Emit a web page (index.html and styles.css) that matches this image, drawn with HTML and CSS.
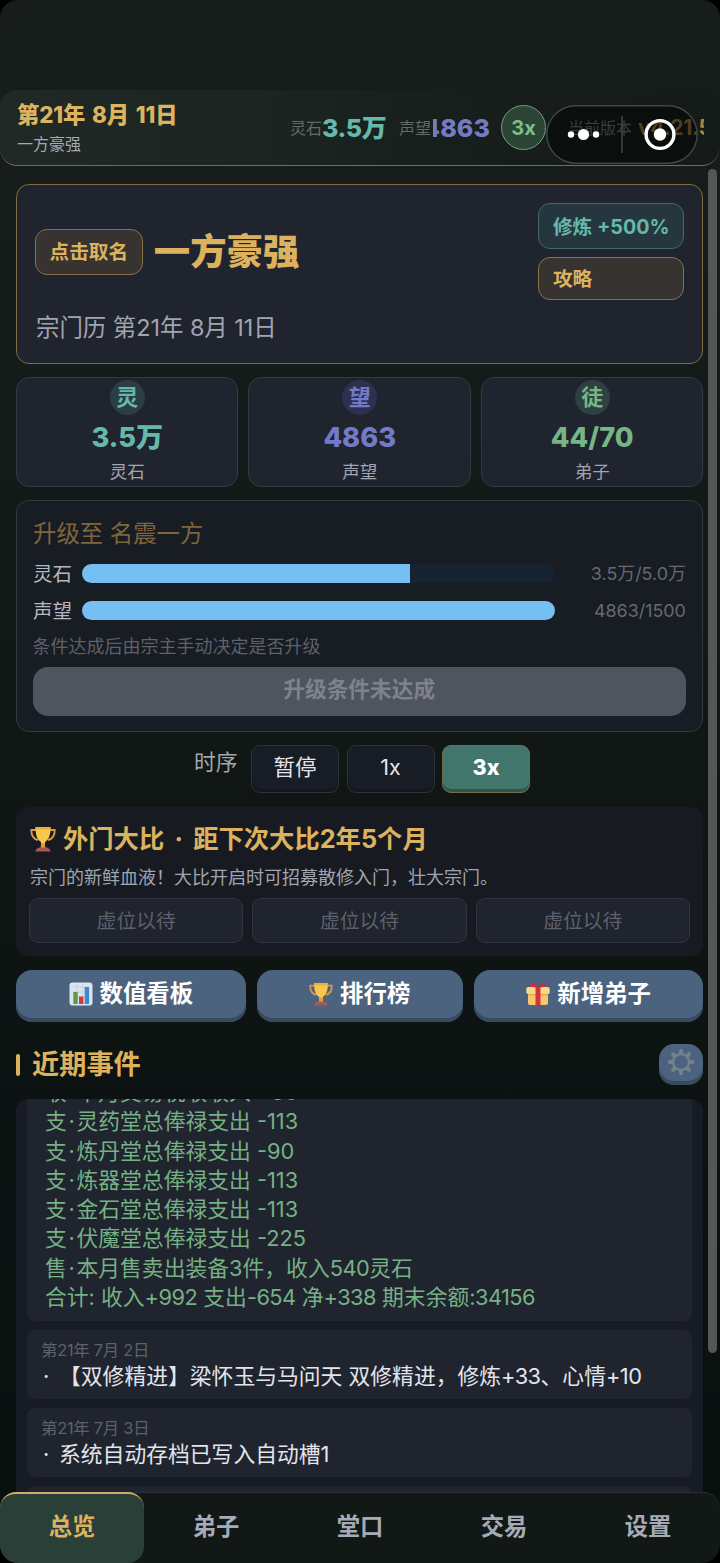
FILE: index.html
```html
<!DOCTYPE html>
<html lang="zh-CN">
<head>
<meta charset="utf-8">
<title>一方豪强</title>
<link rel="stylesheet" href="styles.css">
</head>
<body>
<svg class="defs" width="0" height="0" aria-hidden="true">
  <symbol id="trophy" viewBox="0 0 26 26">
    <path d="M6 4H1.3C1.2 9.5 3.5 13 8 14M20 4h4.7C24.8 9.5 22.500 13 18 14" fill="none" stroke="#d79a45" stroke-width="1.900"/>
    <path d="M5.500 1h15c0 8-1.500 12.500-5.500 15v4h-4v-4C7 13.500 5.500 9 5.500 1z" fill="#fbc64c"/>
    <path d="M5.500 1h15v2.500h-15z" fill="#e9ad43"/>
    <path d="M11.500 17h3l1 5h-5z" fill="#df9a3c"/>
    <path d="M5.500 25.500c0-2.500 2.500-3.800 4.500-4h6c2 .2 4.500 1.500 4.500 4z" fill="#a9594c"/>
  </symbol>
</svg>
<div class="app">
  <header class="topbar">
    <div class="when">
      <div class="when-date">第21年 8月 11日</div>
      <div class="when-rank">一方豪强</div>
    </div>
    <div class="res"><span class="res-label">灵石</span><b class="teal">3.5万</b></div>
    <div class="res fame"><span class="res-label">声望</span><span class="clip"><b class="violet">4863</b></span></div>
    <div class="pace">3x</div>
    <div class="version"><span class="res-label">当前版本</span><b>v4.21.5</b></div>
    <div class="capsule">
      <svg width="152" height="58" viewBox="0 0 152 58">
        <g fill="#fff"><circle cx="25" cy="29.500" r="3.200"/><circle cx="37.500" cy="29.500" r="5.600"/><circle cx="50" cy="29.500" r="3.200"/><circle cx="114" cy="29.500" r="6.200"/></g>
        <path d="M76 11v37" stroke="#444846" stroke-width="1.500"/>
        <circle cx="114" cy="29.500" r="13.900" fill="none" stroke="#fff" stroke-width="3.400"/>
      </svg>
    </div>
  </header>

  <main class="content">
    <section class="card sect">
      <div class="sect-top">
        <span class="tag gold name-tag">点击取名</span>
        <h1 class="sect-name">一方豪强</h1>
        <div class="sect-side">
          <span class="tag cyan">修炼 +500%</span>
          <span class="tag gold guide">攻略</span>
        </div>
      </div>
      <div class="sect-date">宗门历 第21年 8月 11日</div>
    </section>

    <section class="stats">
      <div class="card stat teal"><span class="orb">灵</span><b>3.5万</b><small>灵石</small></div>
      <div class="card stat violet"><span class="orb">望</span><b>4863</b><small>声望</small></div>
      <div class="card stat green"><span class="orb">徒</span><b>44/70</b><small>弟子</small></div>
    </section>

    <section class="card upgrade">
      <h2 class="upgrade-title">升级至 名震一方</h2>
      <div class="req"><span>灵石</span><div class="track"><div class="fill" style="width:69.300%"></div></div><em>3.5万/5.0万</em></div>
      <div class="req"><span>声望</span><div class="track"><div class="fill" style="width:100%"></div></div><em>4863/1500</em></div>
      <p class="hint">条件达成后由宗主手动决定是否升级</p>
      <div class="upgrade-btn">升级条件未达成</div>
    </section>

    <section class="speed">
      <span class="speed-label">时序</span>
      <span class="speed-btn">暂停</span>
      <span class="speed-btn">1x</span>
      <span class="speed-btn on">3x</span>
    </section>

    <section class="contest">
      <h2 class="contest-title"><svg width="26" height="26"><use href="#trophy"/></svg><span>外门大比</span><i>·</i><span>距下次大比2年5个月</span></h2>
      <p class="contest-desc">宗门的新鲜血液！大比开启时可招募散修入门，壮大宗门。</p>
      <div class="slots"><span>虚位以待</span><span>虚位以待</span><span>虚位以待</span></div>
    </section>

    <section class="actions">
      <span class="btn"><svg width="24" height="24" viewBox="0 0 24 24"><rect x=".5" y=".5" width="23" height="23" rx="3" fill="#dce5ee"/><path d="M4 5h16M4 10h16M4 15h16M8 2v20M14 2v20" stroke="#c3d1df" stroke-width=".8"/><path d="M4.300 10h4.400v12H4.300z" fill="#5c9b45"/><path d="M10 14.500h4.400V22H10z" fill="#d23c38"/><path d="M15.700 5h4.400v17h-4.400z" fill="#3f86d4"/></svg>数值看板</span>
      <span class="btn mid"><svg width="24" height="24"><use href="#trophy"/></svg>排行榜</span>
      <span class="btn"><svg width="24" height="24" viewBox="0 0 24 24"><path d="M2 10h20v11a2 2 0 0 1-2 2H4a2 2 0 0 1-2-2z" fill="#f5c96e"/><rect x=".3" y="5" width="23.400" height="7" rx="1.800" fill="#fad985"/><path d="M2 12h20v1.200H2z" fill="#dba94f"/><path d="M9.500 5h5v18h-5z" fill="#d8323f"/><path d="M12 5.500C9 .5 4 .5 4 2.500S6 5.500 12 5.500zM12 5.500C15 .5 20 .5 20 2.500s-2 3-8 3z" fill="#c92f3a"/></svg>新增弟子</span>
    </section>

    <section class="events-head">
      <h2>近期事件</h2>
      <span class="gear"><svg width="28" height="28" viewBox="0 0 28 28"><path fill="#75818c" fill-rule="evenodd" d="M12.600 1h2.800l.9 4.200 2.300 1 3.700-2.400 2 2-2.400 3.700 1 2.300 4.100.8v2.800l-4.200.9-.9 2.300 2.400 3.700-2 2-3.700-2.400-2.300 1-.9 4.100h-2.800l-.9-4.200-2.300-.9-3.700 2.400-2-2 2.400-3.700-1-2.300-4.100-.9v-2.800l4.200-.8.9-2.300-2.400-3.700 2-2 3.700 2.400 2.300-1zM14 7.200a6.800 6.800 0 1 0 0 13.600 6.800 6.800 0 0 0 0-13.600z"/></svg></span>
    </section>

    <section class="log">
      <article class="entry ledger">
        <p>收<s>·</s>本月交易税收收入 +30</p>
        <p>支<s>·</s>灵药堂总俸禄支出 -113</p>
        <p>支<s>·</s>炼丹堂总俸禄支出 -90</p>
        <p>支<s>·</s>炼器堂总俸禄支出 -113</p>
        <p>支<s>·</s>金石堂总俸禄支出 -113</p>
        <p>支<s>·</s>伏魔堂总俸禄支出 -225</p>
        <p>售<s>·</s>本月售卖出装备3件，收入<b>540</b>灵石</p>
        <p>合计: 收入<b>+992</b> 支出<b>-654</b> 净<b>+338</b> 期末余额<b>:34156</b></p>
      </article>
      <article class="entry"><time>第21年 7月 2日</time><p><i>·</i>【双修精进】梁怀玉与马问天 双修精进，修炼<b>+33</b>、心情<b>+10</b></p></article>
      <article class="entry"><time>第21年 7月 3日</time><p><i>·</i>系统自动存档已写入自动槽1</p></article>
      <article class="entry"></article>
    </section>
  </main>
  <div class="scrollbar"></div>

  <nav class="tabs">
    <span class="tab on">总览</span><span class="tab">弟子</span><span class="tab">堂口</span><span class="tab">交易</span><span class="tab">设置</span>
  </nav>
</div>
</body>
</html>
```

FILE: styles.css
```css
* { box-sizing: border-box; margin: 0; padding: 0; }
html { background: #000; }
body {
  font-family: Inter, "Noto Sans CJK SC", sans-serif;
  color: #e3e5ec;
  background: #000;
}
i, em { font-style: normal; }
.defs { position: absolute; }

.app {
  position: relative;
  width: 720px;
  height: 1563px;
  padding-top: 90px;
  display: flex;
  flex-direction: column;
  overflow: hidden;
  border-radius: 18px;
  background: linear-gradient(180deg, #171d1b 0%, #151b19 25%, #101614 52%, #0c1211 72%, #08100e 100%);
}

.teal { color: #65b8aa; }
.violet { color: #737bc6; }
.green { color: #76b585; }

.topbar {
  position: relative;
  flex: none;
  width: 719px;
  height: 76px;
  padding-left: 17px;
  display: flex;
  align-items: center;
  border-bottom: 1.500px solid #806c44;
  border-radius: 17px;
  background: linear-gradient(90deg, #202925 0%, #1b2421 40%, #161d1a 70%, #151b19 100%);
}
.when { width: 273px; }
.when-date { margin-top: 1px; font-size: 22.300px; letter-spacing: -.1px; word-spacing: 2px; font-weight: 800; line-height: 30px; color: #dcb45f; white-space: nowrap; }
.when-rank { font-size: 16px; line-height: 24px; margin-top: 2px; color: #a4a9b2; }
.res { display: flex; align-items: center; width: 109px; white-space: nowrap; line-height: 30px; }
.res-label { font-size: 16px; color: #636967; }
.res b { font-size: 25px; font-weight: 800; letter-spacing: -.4px; }
.fame { width: 92px; }
.clip { width: 57px; margin-left: 2px; overflow: hidden; display: flex; justify-content: flex-end; }
.res .clip b { letter-spacing: .1px; }
.pace {
  width: 45px;
  height: 45px;
  margin-left: 10px;
  border: 1.500px solid #68a378;
  border-radius: 50%;
  background: #2c4435;
  color: #7dbd8a;
  font-size: 20px;
  font-weight: 700;
  line-height: 44px;
  text-align: center;
}
.version { display: flex; align-items: center; width: 136px; margin-left: 22px; overflow: hidden; white-space: nowrap; line-height: 30px; }
.version b { margin-left: 6px; font-size: 21px; letter-spacing: -.3px; color: #b28040; }
.version .res-label { color: #7c817f; }
.capsule {
  position: absolute;
  left: 546px;
  top: 15px;
  width: 152px;
  height: 59px;
  border-radius: 30px;
  background: rgba(2, 6, 6, .55);
  box-shadow: inset 0 0 0 1.500px #434644;
}

.content {
  flex: 1;
  min-height: 0;
  padding: 18px 16.600px 0 16px;
  display: flex;
  flex-direction: column;
}
.scrollbar { position: absolute; left: 708px; top: 169px; width: 9px; height: 1184px; border-radius: 5px; background: #555756; }

.card { border: 1px solid #343843; border-radius: 13px; background: #20242f; }
.tag { display: block; border: 1px solid; border-radius: 12px; padding: 0 13.500px; font-weight: 700; font-size: 19.700px; white-space: nowrap; }
.tag.gold { background: #363330; border-color: #8a714a; color: #dcb25e; }
.tag.cyan { background: #26363f; border-color: #41696e; color: #65b8aa; height: 46px; line-height: 46px; }
.sect { height: 180px; padding: 18px; border-color: #806b45; flex: none; }
.sect-top { display: flex; align-items: center; }
.name-tag { height: 46px; line-height: 44px; }
.sect-name { margin-left: 11px; font-size: 36.400px; font-weight: 800; line-height: 46px; color: #dcb25e; }
.sect-side { margin-left: auto; width: 146px; display: grid; gap: 8px; }
.guide { height: 43px; line-height: 42px; }
.sect-date { margin-top: 12px; padding-left: 1px; font-size: 23.400px; line-height: 32px; color: #a1a5b2; }

.stats { display: grid; grid-template-columns: repeat(3, 1fr); gap: 10px; margin-top: 13px; flex: none; }
.stat { height: 110px; padding-top: 2px; display: flex; flex-direction: column; align-items: center; }
.orb { width: 35px; height: 35px; border-radius: 50%; font-size: 22px; font-weight: 700; line-height: 34px; text-align: center; background: #2b3e46; }
.violet .orb { background: #2d3150; }
.green .orb { background: #2e413f; }
.stat b { font-size: 27.200px; font-weight: 800; line-height: 34px; margin-top: 6px; }
.stat small { font-size: 17.500px; line-height: 24px; margin-top: 5px; color: #a1a5b2; }

.upgrade { height: 232px; margin-top: 13px; padding: 17px 16.500px 16px 15.500px; background: #181c23; flex: none; }
.upgrade-title { padding-left: .5px; font-size: 23.400px; font-weight: 400; line-height: 32px; color: #80653c; }
.req { display: flex; align-items: center; height: 37px; padding-left: .5px; line-height: 26px; }
.upgrade-title + .req { margin-top: 5px; }
.req span { width: 49px; font-size: 19.500px; color: #b5b8c2; }
.track { width: 473px; height: 19px; border-radius: 10px; background: #182330; overflow: hidden; }
.fill { height: 100%; background: #76bff2; }
.req em { margin-left: auto; font-size: 17.900px; color: #656974; }
.hint { margin-top: 6px; font-size: 18px; line-height: 24px; color: #5d616b; }
.upgrade-btn { height: 49px; margin-top: 8px; border-radius: 15px; background: #4e555f; color: #7e828d; font-size: 21.700px; font-weight: 700; line-height: 44px; text-align: center; }

.speed { display: flex; gap: 7.500px; margin-top: 13px; padding-left: 178px; flex: none; }
.speed-label { width: 49.500px; font-size: 21.800px; line-height: 35px; color: #a1a5ac; }
.speed-btn { width: 88px; height: 48px; border: 1.500px solid #2d313b; border-radius: 9px; background: #181c24; box-shadow: inset 0 -3px #14171d; text-align: center; font-size: 21.500px; line-height: 42px; }
.speed-btn.on { background: #42756c; border-color: #766e40; box-shadow: inset 0 -3px #33544c; color: #fff; font-weight: 800; }

.contest { height: 149px; margin-top: 14px; padding: 16px 13.400px 0 13px; border-radius: 12px; background: #171b21; flex: none; }
.contest-title { display: flex; align-items: center; font-size: 25.300px; line-height: 32px; color: #dcb25e; padding-left: 1px; }
.contest-title span { margin-left: 7px; white-space: nowrap; }
.contest-title i { width: 29px; text-align: center; }
.contest-title i + span { margin-left: 0; }
.contest-desc { margin-top: 11px; padding-left: 1px; font-size: 18px; line-height: 24px; color: #a1a5b0; }
.slots { display: grid; grid-template-columns: repeat(3, 1fr); gap: 9px; margin-top: 8px; }
.slots span { height: 45px; border: 1.500px solid #303440; border-radius: 9px; background: #20242e; color: #5d616c; font-size: 19.800px; line-height: 44px; text-align: center; }

.actions { display: flex; gap: 11px; margin-top: 14px; flex: none; }
.btn { flex: 1; height: 52px; padding-bottom: 4px; border-radius: 16px; background: #4c637f; box-shadow: inset 0 -4px #394a60; color: #fff; display: flex; align-items: center; justify-content: center; gap: 7px; font-size: 23.400px; line-height: 34px; font-weight: 700; }
.btn.mid { flex: 0 0 206px; }

.events-head { display: flex; align-items: center; height: 41px; margin-top: 22px; padding-right: .4px; flex: none; }
.events-head h2 { display: flex; align-items: center; gap: 12px; font-size: 27.200px; line-height: 36px; color: #dcb25e; }
.events-head h2::before { content: ""; width: 4px; height: 22px; border-radius: 2px; background: #dcb25e; }
.gear { margin-left: auto; width: 44px; height: 41px; padding-bottom: 5px; border-radius: 15px; background: #4c637f; box-shadow: inset 0 -4px #394a60; display: flex; align-items: center; justify-content: center; }

.log { flex: 1; min-height: 0; margin-top: 14px; padding: 0 11px; border-radius: 12px 12px 0 0; background: #171b23; overflow: hidden; }
.entry { height: 69px; margin-bottom: 9px; padding: 9px 14px; border-radius: 8px; background: #20242e; }
.entry time { display: block; font-size: 16.400px; letter-spacing: -.25px; line-height: 22px; color: #5d616c; }
.entry p { font-size: 21.800px; line-height: 30px; white-space: nowrap; }
.entry p b { font-weight: 400; letter-spacing: -.55px; }
.entry i { display: inline-block; width: 18px; padding-left: 2px; }
.entry s { text-decoration: none; margin: 0 1.700px; }
.ledger { height: 243px; margin-top: -21px; padding: 0 18px; }
.ledger p { line-height: 29.250px; color: #75b184; }

.tabs { flex: none; position: relative; height: 71px; display: grid; grid-template-columns: repeat(5, 1fr); border-top: 1.500px solid #2c3036; border-radius: 17px; background: #121816; box-shadow: 0 2px #000; }
.tab { font-size: 23.300px; font-weight: 700; line-height: 68px; text-align: center; color: #a7abb8; }
.tab.on { margin-top: -1px; border-top: 2.500px solid #cfae63; border-radius: 16px; background: #293f38; color: #dcb25e; line-height: 66px; }
```
